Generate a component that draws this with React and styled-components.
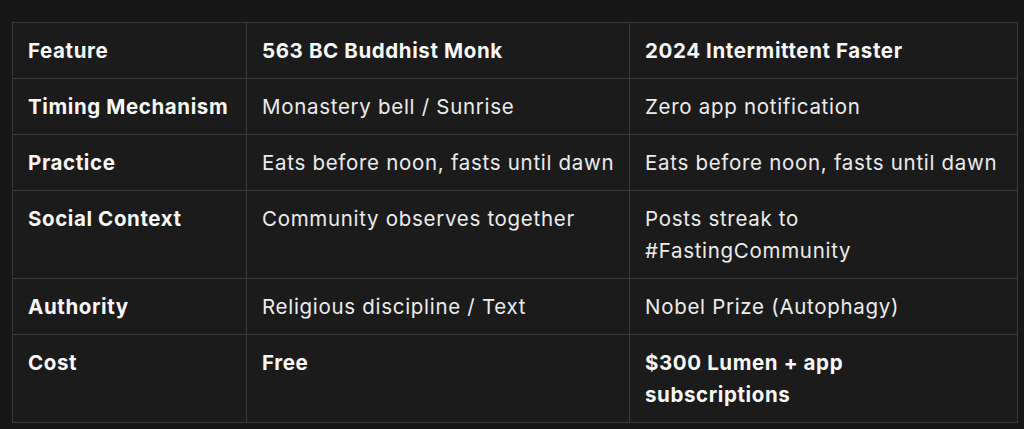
import React from 'react';
import styled, { createGlobalStyle } from 'styled-components';

const GlobalStyle = createGlobalStyle`
    html, body {
        margin: 0;
        padding: 0;
        background-color: #171717;
    }
    body {
        font-family: Inter, "Noto Sans", sans-serif;
        color: #ececec;
    }
`;

const Page = styled.div`
    padding: 22px 7px 8px 12px;
`;

const Table = styled.table`
    width: 1005px;
    border-collapse: collapse;
    table-layout: fixed;
    background-color: #1b1b1b;
    border: 1px solid #3a3a3a;
`;

const Col = styled.col`
    width: ${(p) => p.$w}px;
`;

const Cell = styled.td`
    border: 1px solid #3a3a3a;
    padding: 12px 10px 11px 15px;
    font-size: 20.5px;
    line-height: 32px;
    vertical-align: top;
    font-weight: ${(p) => (p.$bold ? 700 : 400)};
    color: ${(p) => (p.$bold ? '#f7f7f7' : '#ececec')};
    letter-spacing: ${(p) => (p.$bold ? '0.6px' : '0.7px')};
`;

const HeadCell = styled(Cell).attrs({ as: 'th' })`
    text-align: left;
    font-weight: 700;
    letter-spacing: 0.6px;
    color: #f7f7f7;
`;

const rows = [
    ['Timing Mechanism', 'Monastery bell / Sunrise', 'Zero app notification'],
    ['Practice', 'Eats before noon, fasts until dawn', 'Eats before noon, fasts until dawn'],
    ['Social Context', 'Community observes together', 'Posts streak to #FastingCommunity'],
    ['Authority', 'Religious discipline / Text', 'Nobel Prize (Autophagy)'],
    ['Cost', 'Free', ['$300 Lumen + app', <br key="br" />, 'subscriptions'], true],
];

const App = () => (
    <>
        <GlobalStyle />
        <Page>
            <Table>
                <colgroup>
                    <Col $w={234} />
                    <Col $w={383} />
                    <Col $w={388} />
                </colgroup>
                <thead>
                    <tr>
                        <HeadCell>Feature</HeadCell>
                        <HeadCell>563 BC Buddhist Monk</HeadCell>
                        <HeadCell>2024 Intermittent Faster</HeadCell>
                    </tr>
                </thead>
                <tbody>
                    {rows.map(([label, monk, faster, strong]) => (
                        <tr key={label}>
                            <Cell $bold>{label}</Cell>
                            <Cell $bold={strong}>{monk}</Cell>
                            <Cell $bold={strong}>{faster}</Cell>
                        </tr>
                    ))}
                </tbody>
            </Table>
        </Page>
    </>
);

export default App;
